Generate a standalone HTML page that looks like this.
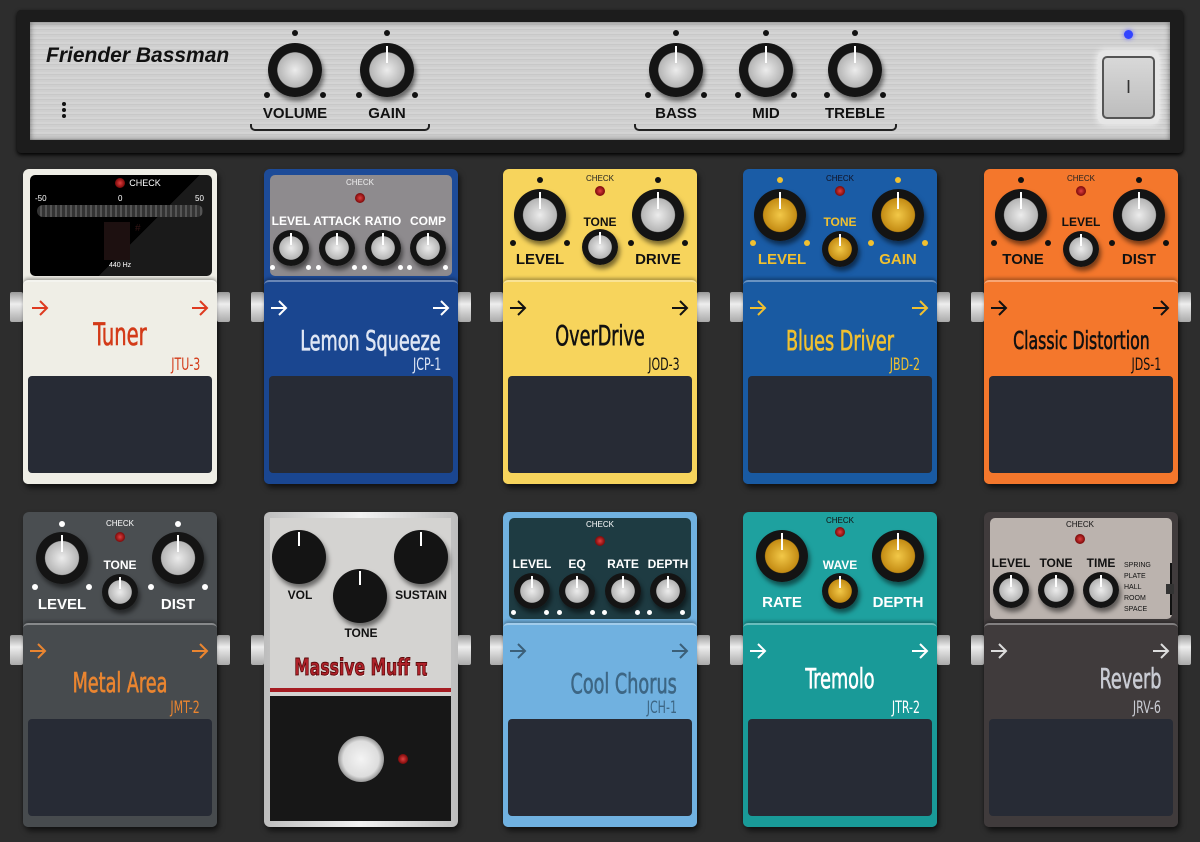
<!DOCTYPE html><html><head><meta charset="utf-8"><style>
*{box-sizing:border-box;margin:0;padding:0}
body{width:1200px;height:842px;background:#2d2d2d;position:relative;overflow:hidden;font-family:"Liberation Sans",sans-serif}
.a{position:absolute}
.amp{left:17px;top:10px;width:1166px;height:143px;background:#1c1c1c;border-radius:4px;box-shadow:0 2px 4px #000}
.face{left:30px;top:22px;width:1140px;height:118px;background:repeating-linear-gradient(180deg,#d4d4d4 0 2px,#c8c8c8 2px 3px,#cfcfcf 3px 5px);box-shadow:inset 0 0 6px rgba(0,0,0,.5)}
.k{position:absolute;border-radius:50%;box-shadow:2px 4px 5px rgba(0,0,0,.5);background:radial-gradient(circle closest-side,#ececec 0,#b5b5b5 64%,#141414 67%)}
.k.g{background:radial-gradient(circle closest-side,#f2c848 0,#c48c14 64%,#141414 67%)}
.k.b{background:#141414}
.k i{position:absolute;left:calc(50% - 1px);top:3px;width:2px;height:32%;background:#fff}
.d{position:absolute;width:6px;height:6px;border-radius:50%;background:#111}
.d.w{background:#fff}.d.y{background:#f0c030}
.l{position:absolute;font-weight:bold;transform:translateX(-50%);white-space:nowrap;font-size:14px}
.p{position:absolute;width:194px;height:315px;border-radius:6px;box-shadow:2px 4px 6px rgba(0,0,0,.6)}
.bt{position:absolute;left:0;top:111px;width:194px;height:204px;border-radius:5px;border-top:2px solid rgba(255,255,255,.35);box-shadow:0 -2px 3px rgba(0,0,0,.3)}
.pad{position:absolute;left:5px;top:207px;width:184px;height:97px;background:#272b35;border-radius:4px}
.j{position:absolute;top:123px;width:13px;height:30px;background:linear-gradient(180deg,#999,#eee 40%,#aaa);border-radius:2px}
.ar{position:absolute;top:131px;width:18px;height:16px}
.t{position:absolute;right:17px;top:152px;font-family:"DejaVu Sans Condensed","DejaVu Sans",sans-serif;font-size:28px;white-space:nowrap;transform:scaleX(.7);transform-origin:100% 50%;-webkit-text-stroke:.6px currentColor}
.t.c{right:auto;left:0;width:194px;text-align:center;transform-origin:50% 50%}
.m{position:absolute;right:17px;top:186px;font-family:"DejaVu Sans Condensed","DejaVu Sans",sans-serif;font-size:17px;transform:scaleX(.72);transform-origin:100% 50%}
.ck{position:absolute;font-size:8px;transform:translateX(-50%)}
.led{position:absolute;width:10px;height:10px;border-radius:50%;background:radial-gradient(circle,#e04040 0,#8a1010 60%,#4a0808);transform:translate(-50%,-50%)}
.pn{position:absolute;left:6px;top:6px;width:182px;height:101px;border-radius:5px}
</style></head><body>
<svg width="0" height="0" style="position:absolute"><defs><symbol id="arw" viewBox="0 0 18 16"><path d="M1 8H16M9 1L16 8L9 15" fill="none" stroke="currentColor" stroke-width="2"/></symbol></defs></svg>
<div class="a amp"></div><div class="a face"></div>
<div class="a" style="left:46px;top:44px;font-size:21px;font-weight:bold;font-style:italic;color:#111">Friender Bassman</div>
<div class="a" style="left:62px;top:102px;width:4px;height:4px;border-radius:50%;background:#111;box-shadow:0 6px #111,0 12px #111"></div>
<div class="k" style="left:268px;top:43px;width:54px;height:54px"></div>
<div class="k" style="left:360px;top:43px;width:54px;height:54px"><i></i></div>
<div class="k" style="left:649px;top:43px;width:54px;height:54px"><i></i></div>
<div class="k" style="left:739px;top:43px;width:54px;height:54px"><i></i></div>
<div class="k" style="left:828px;top:43px;width:54px;height:54px"><i></i></div>
<div class="d" style="left:292px;top:30px"></div><div class="d" style="left:264px;top:92px"></div><div class="d" style="left:320px;top:92px"></div>
<div class="d" style="left:384px;top:30px"></div><div class="d" style="left:356px;top:92px"></div><div class="d" style="left:412px;top:92px"></div>
<div class="d" style="left:673px;top:30px"></div><div class="d" style="left:645px;top:92px"></div><div class="d" style="left:701px;top:92px"></div>
<div class="d" style="left:763px;top:30px"></div><div class="d" style="left:735px;top:92px"></div><div class="d" style="left:791px;top:92px"></div>
<div class="d" style="left:852px;top:30px"></div><div class="d" style="left:824px;top:92px"></div><div class="d" style="left:880px;top:92px"></div>
<div class="l" style="left:295px;top:105px;font-size:15px;color:#111">VOLUME</div>
<div class="l" style="left:387px;top:105px;font-size:15px;color:#111">GAIN</div>
<div class="l" style="left:676px;top:105px;font-size:15px;color:#111">BASS</div>
<div class="l" style="left:766px;top:105px;font-size:15px;color:#111">MID</div>
<div class="l" style="left:855px;top:105px;font-size:15px;color:#111">TREBLE</div>
<div class="a" style="left:250px;top:124px;width:180px;height:7px;border:2px solid #222;border-top:none;border-radius:0 0 5px 5px"></div>
<div class="a" style="left:634px;top:124px;width:263px;height:7px;border:2px solid #222;border-top:none;border-radius:0 0 5px 5px"></div>
<div class="a" style="left:1124px;top:30px;width:9px;height:9px;border-radius:50%;background:#3344ff;box-shadow:0 0 5px #66f"></div>
<div class="a" style="left:1098px;top:51px;width:61px;height:73px;border-radius:6px;background:#e6e6e6;box-shadow:0 0 8px #fff"></div>
<div class="a" style="left:1102px;top:56px;width:53px;height:63px;border-radius:5px;background:linear-gradient(#d8d8d8,#bdbdbd);border:2px solid #555;text-align:center;line-height:58px;font-size:18px;color:#333">I</div>

<!-- Tuner -->
<div class="p" style="left:23px;top:169px;background:#efeee6">
<div class="j" style="left:-13px"></div><div class="j" style="left:194px"></div>
<div class="pn" style="left:7px;background:linear-gradient(135deg,#000 60%,#1a1a1a 60%)"></div>
<div class="ck" style="left:122px;top:9px;color:#fff;font-size:9px">CHECK</div>
<div class="led" style="left:97px;top:14px"></div>
<div class="a" style="left:12px;top:25px;font-size:8px;color:#fff">-50</div>
<div class="a" style="left:95px;top:25px;font-size:8px;color:#fff">0</div>
<div class="a" style="left:172px;top:25px;font-size:8px;color:#fff">50</div>
<div class="a" style="left:14px;top:36px;width:166px;height:12px;border-radius:6px;background:repeating-linear-gradient(90deg,#333 0 3px,#555 3px 5px)"></div>
<div class="a" style="left:81px;top:53px;width:26px;height:38px;background:#1d1010"></div>
<div class="a" style="left:112px;top:54px;font-size:10px;color:#331515">#</div>
<div class="a" style="left:86px;top:93px;font-size:7px;color:#fff">440 Hz</div>
<div class="bt" style="background:#efeee6"></div>
<svg class="ar" style="left:8px;color:#de3a20"><use href="#arw"/></svg><svg class="ar" style="left:168px;color:#de3a20"><use href="#arw"/></svg>
<div class="t c" style="color:#d33a18;font-size:31px;top:148px">Tuner</div>
<div class="m" style="color:#d33a18">JTU-3</div>
<div class="pad"></div></div>

<!-- Lemon Squeeze -->
<div class="p" style="left:264px;top:169px;background:#1d4b98">
<div class="j" style="left:-13px"></div><div class="j" style="left:194px"></div>
<div class="pn" style="background:#8e8b8e"></div>
<div class="ck" style="left:96px;top:9px;color:#eee">CHECK</div><div class="led" style="left:96px;top:29px"></div>
<div class="l" style="left:27px;top:45px;color:#fff;font-size:12px">LEVEL</div><div class="l" style="left:73px;top:45px;color:#fff;font-size:12px">ATTACK</div><div class="l" style="left:119px;top:45px;color:#fff;font-size:12px">RATIO</div><div class="l" style="left:164px;top:45px;color:#fff;font-size:12px">COMP</div>
<div class="k" style="left:9px;top:61px;width:36px;height:36px"><i></i></div><div class="k" style="left:55px;top:61px;width:36px;height:36px"><i></i></div><div class="k" style="left:101px;top:61px;width:36px;height:36px"><i></i></div><div class="k" style="left:146px;top:61px;width:36px;height:36px"><i></i></div>
<div class="d w" style="left:6px;top:96px;width:5px;height:5px"></div><div class="d w" style="left:42px;top:96px;width:5px;height:5px"></div><div class="d w" style="left:52px;top:96px;width:5px;height:5px"></div><div class="d w" style="left:88px;top:96px;width:5px;height:5px"></div><div class="d w" style="left:98px;top:96px;width:5px;height:5px"></div><div class="d w" style="left:134px;top:96px;width:5px;height:5px"></div><div class="d w" style="left:143px;top:96px;width:5px;height:5px"></div><div class="d w" style="left:179px;top:96px;width:5px;height:5px"></div>
<div class="bt" style="background:#1a4690"></div>
<svg class="ar" style="left:6px;color:#fff"><use href="#arw"/></svg><svg class="ar" style="left:168px;color:#fff"><use href="#arw"/></svg>
<div class="t" style="color:#dfe6f4;top:155px">Lemon Squeeze</div><div class="m" style="color:#dfe6f4">JCP-1</div>
<div class="pad"></div></div>

<!-- OverDrive -->
<div class="p" style="left:503px;top:169px;background:#f7d45c">
<div class="j" style="left:-13px"></div><div class="j" style="left:194px"></div>
<div class="ck" style="left:97px;top:5px;color:#222">CHECK</div><div class="led" style="left:97px;top:22px"></div>
<div class="d" style="left:34px;top:8px"></div><div class="d" style="left:7px;top:71px"></div><div class="d" style="left:61px;top:71px"></div>
<div class="d" style="left:152px;top:8px"></div><div class="d" style="left:125px;top:71px"></div><div class="d" style="left:179px;top:71px"></div>
<div class="k" style="left:11px;top:20px;width:52px;height:52px"><i></i></div>
<div class="k" style="left:79px;top:60px;width:36px;height:36px"><i></i></div>
<div class="k" style="left:129px;top:20px;width:52px;height:52px"><i></i></div>
<div class="l" style="left:37px;top:82px;color:#111;font-size:15px">LEVEL</div><div class="l" style="left:97px;top:46px;color:#111;font-size:12px">TONE</div><div class="l" style="left:155px;top:82px;color:#111;font-size:15px">DRIVE</div>
<div class="bt" style="background:#f7d45c"></div>
<svg class="ar" style="left:6px;color:#111"><use href="#arw"/></svg><svg class="ar" style="left:168px;color:#111"><use href="#arw"/></svg>
<div class="t c" style="color:#111;top:150px">OverDrive</div><div class="m" style="color:#111">JOD-3</div>
<div class="pad"></div></div>

<!-- Blues Driver -->
<div class="p" style="left:743px;top:169px;background:#1a5ca6">
<div class="j" style="left:-13px"></div><div class="j" style="left:194px"></div>
<div class="ck" style="left:97px;top:5px;color:#112">CHECK</div><div class="led" style="left:97px;top:22px"></div>
<div class="d y" style="left:34px;top:8px"></div><div class="d y" style="left:7px;top:71px"></div><div class="d y" style="left:61px;top:71px"></div>
<div class="d y" style="left:152px;top:8px"></div><div class="d y" style="left:125px;top:71px"></div><div class="d y" style="left:179px;top:71px"></div>
<div class="k g" style="left:11px;top:20px;width:52px;height:52px"><i></i></div>
<div class="k g" style="left:79px;top:62px;width:36px;height:36px"><i></i></div>
<div class="k g" style="left:129px;top:20px;width:52px;height:52px"><i></i></div>
<div class="l" style="left:39px;top:82px;color:#f0c030;font-size:15px">LEVEL</div><div class="l" style="left:97px;top:46px;color:#f0c030;font-size:12px">TONE</div><div class="l" style="left:155px;top:82px;color:#f0c030;font-size:15px">GAIN</div>
<div class="bt" style="background:#195aa2"></div>
<svg class="ar" style="left:6px;color:#f0c030"><use href="#arw"/></svg><svg class="ar" style="left:168px;color:#f0c030"><use href="#arw"/></svg>
<div class="t c" style="color:#f0c030;top:155px">Blues Driver</div><div class="m" style="color:#f0c030">JBD-2</div>
<div class="pad"></div></div>

<!-- Classic Distortion -->
<div class="p" style="left:984px;top:169px;background:#f4772c">
<div class="j" style="left:-13px"></div><div class="j" style="left:194px"></div>
<div class="ck" style="left:97px;top:5px;color:#222">CHECK</div><div class="led" style="left:97px;top:22px"></div>
<div class="d" style="left:34px;top:8px"></div><div class="d" style="left:7px;top:71px"></div><div class="d" style="left:61px;top:71px"></div>
<div class="d" style="left:152px;top:8px"></div><div class="d" style="left:125px;top:71px"></div><div class="d" style="left:179px;top:71px"></div>
<div class="k" style="left:11px;top:20px;width:52px;height:52px"><i></i></div>
<div class="k" style="left:79px;top:62px;width:36px;height:36px"><i></i></div>
<div class="k" style="left:129px;top:20px;width:52px;height:52px"><i></i></div>
<div class="l" style="left:39px;top:82px;color:#111;font-size:15px">TONE</div><div class="l" style="left:97px;top:46px;color:#111;font-size:12px">LEVEL</div><div class="l" style="left:155px;top:82px;color:#111;font-size:15px">DIST</div>
<div class="bt" style="background:#f4772c"></div>
<svg class="ar" style="left:6px;color:#111"><use href="#arw"/></svg><svg class="ar" style="left:168px;color:#111"><use href="#arw"/></svg>
<div class="t c" style="color:#111;font-size:25px;top:157px">Classic Distortion</div><div class="m" style="color:#111">JDS-1</div>
<div class="pad"></div></div>

<!-- Metal Area -->
<div class="p" style="left:23px;top:512px;background:#4a4e51">
<div class="j" style="left:-13px"></div><div class="j" style="left:194px"></div>
<div class="ck" style="left:97px;top:7px;color:#fff">CHECK</div><div class="led" style="left:97px;top:25px"></div>
<div class="d w" style="left:36px;top:9px"></div><div class="d w" style="left:9px;top:72px"></div><div class="d w" style="left:63px;top:72px"></div>
<div class="d w" style="left:152px;top:9px"></div><div class="d w" style="left:125px;top:72px"></div><div class="d w" style="left:179px;top:72px"></div>
<div class="k" style="left:13px;top:20px;width:52px;height:52px"><i></i></div>
<div class="k" style="left:79px;top:62px;width:36px;height:36px"><i></i></div>
<div class="k" style="left:129px;top:20px;width:52px;height:52px"><i></i></div>
<div class="l" style="left:39px;top:84px;color:#fff;font-size:15px">LEVEL</div><div class="l" style="left:97px;top:46px;color:#fff;font-size:12px">TONE</div><div class="l" style="left:155px;top:84px;color:#fff;font-size:15px">DIST</div>
<div class="bt" style="background:#474b4e"></div>
<svg class="ar" style="left:6px;color:#ea8530"><use href="#arw"/></svg><svg class="ar" style="left:168px;color:#ea8530"><use href="#arw"/></svg>
<div class="t c" style="color:#ea8530;top:154px">Metal Area</div><div class="m" style="color:#ea8530">JMT-2</div>
<div class="pad"></div></div>

<!-- Massive Muff -->
<div class="p" style="left:264px;top:512px;background:linear-gradient(90deg,#bdbdbd,#f2f2f2 50%,#bdbdbd)">
<div class="j" style="left:-13px"></div><div class="j" style="left:194px"></div>
<div class="a" style="left:6px;top:6px;width:181px;height:178px;background:#d4d3d1"></div>
<div class="a" style="left:6px;top:176px;width:181px;height:4px;background:#a51c22"></div>
<div class="a" style="left:6px;top:184px;width:181px;height:125px;background:#171717"></div>
<div class="k b" style="left:8px;top:18px;width:54px;height:54px"><i style="top:2px;height:14px"></i></div>
<div class="k b" style="left:69px;top:57px;width:54px;height:54px"><i style="top:2px;height:14px"></i></div>
<div class="k b" style="left:130px;top:18px;width:54px;height:54px"><i style="top:2px;height:14px"></i></div>
<div class="l" style="left:36px;top:76px;color:#111;font-size:12px">VOL</div>
<div class="l" style="left:97px;top:114px;color:#111;font-size:12px">TONE</div>
<div class="l" style="left:157px;top:76px;color:#111;font-size:12px">SUSTAIN</div>
<div class="l" style="left:97px;top:143px;color:#b0222a;font-size:23px;font-family:'DejaVu Sans',sans-serif;-webkit-text-stroke:1px #5a0a0a;text-shadow:1px 1px #fff;transform:translateX(-50%) scaleX(.68)">Massive Muff π</div>
<div class="a" style="left:74px;top:224px;width:46px;height:46px;border-radius:50%;background:radial-gradient(circle,#f4f4f4 0,#ddd 55%,#999 70%,#666)"></div>
<div class="led" style="left:139px;top:247px"></div>
</div>

<!-- Cool Chorus -->
<div class="p" style="left:503px;top:512px;background:#70b1e0">
<div class="j" style="left:-13px"></div><div class="j" style="left:194px"></div>
<div class="pn" style="background:#1e3b42"></div>
<div class="ck" style="left:97px;top:8px;color:#fff">CHECK</div><div class="led" style="left:97px;top:29px"></div>
<div class="l" style="left:29px;top:45px;color:#fff;font-size:12px">LEVEL</div><div class="l" style="left:74px;top:45px;color:#fff;font-size:12px">EQ</div><div class="l" style="left:120px;top:45px;color:#fff;font-size:12px">RATE</div><div class="l" style="left:165px;top:45px;color:#fff;font-size:12px">DEPTH</div>
<div class="k" style="left:11px;top:61px;width:36px;height:36px"><i></i></div><div class="k" style="left:56px;top:61px;width:36px;height:36px"><i></i></div><div class="k" style="left:102px;top:61px;width:36px;height:36px"><i></i></div><div class="k" style="left:147px;top:61px;width:36px;height:36px"><i></i></div>
<div class="d w" style="left:8px;top:98px;width:5px;height:5px"></div><div class="d w" style="left:41px;top:98px;width:5px;height:5px"></div><div class="d w" style="left:54px;top:98px;width:5px;height:5px"></div><div class="d w" style="left:87px;top:98px;width:5px;height:5px"></div><div class="d w" style="left:99px;top:98px;width:5px;height:5px"></div><div class="d w" style="left:132px;top:98px;width:5px;height:5px"></div><div class="d w" style="left:144px;top:98px;width:5px;height:5px"></div><div class="d w" style="left:177px;top:98px;width:5px;height:5px"></div>
<div class="bt" style="background:#70b1e0"></div>
<svg class="ar" style="left:6px;color:#3b5f78"><use href="#arw"/></svg><svg class="ar" style="left:168px;color:#3b5f78"><use href="#arw"/></svg>
<div class="t" style="color:#3d6684;right:20px;top:155px">Cool Chorus</div><div class="m" style="color:#3d6684;right:20px">JCH-1</div>
<div class="pad"></div></div>

<!-- Tremolo -->
<div class="p" style="left:743px;top:512px;background:#1ea19f">
<div class="j" style="left:-13px"></div><div class="j" style="left:194px"></div>
<div class="ck" style="left:97px;top:4px;color:#111">CHECK</div><div class="led" style="left:97px;top:20px"></div>
<div class="k g" style="left:13px;top:18px;width:52px;height:52px"><i></i></div>
<div class="k g" style="left:79px;top:61px;width:36px;height:36px"><i></i></div>
<div class="k g" style="left:129px;top:18px;width:52px;height:52px"><i></i></div>
<div class="l" style="left:39px;top:82px;color:#fff;font-size:15px">RATE</div><div class="l" style="left:97px;top:46px;color:#fff;font-size:12px">WAVE</div><div class="l" style="left:155px;top:82px;color:#fff;font-size:15px">DEPTH</div>
<div class="bt" style="background:#199a98"></div>
<svg class="ar" style="left:6px;color:#fff"><use href="#arw"/></svg><svg class="ar" style="left:168px;color:#fff"><use href="#arw"/></svg>
<div class="t c" style="color:#fff;top:150px">Tremolo</div><div class="m" style="color:#fff">JTR-2</div>
<div class="pad"></div></div>

<!-- Reverb -->
<div class="p" style="left:984px;top:512px;background:#403b3c">
<div class="j" style="left:-13px"></div><div class="j" style="left:194px"></div>
<div class="pn" style="background:#bbb3ae"></div>
<div class="ck" style="left:96px;top:8px;color:#111">CHECK</div><div class="led" style="left:96px;top:27px"></div>
<div class="l" style="left:27px;top:44px;color:#111;font-size:12px">LEVEL</div><div class="l" style="left:72px;top:44px;color:#111;font-size:12px">TONE</div><div class="l" style="left:117px;top:44px;color:#111;font-size:12px">TIME</div>
<div class="k" style="left:9px;top:60px;width:36px;height:36px"><i></i></div><div class="k" style="left:54px;top:60px;width:36px;height:36px"><i></i></div><div class="k" style="left:99px;top:60px;width:36px;height:36px"><i></i></div>
<div class="a" style="left:140px;top:48px;font-size:7px;line-height:11px;color:#111">SPRING<br>PLATE<br>HALL<br>ROOM<br>SPACE</div>
<div class="a" style="left:186px;top:51px;width:2px;height:52px;background:#111"></div>
<div class="a" style="left:182px;top:72px;width:8px;height:10px;background:#333"></div>
<div class="bt" style="background:#403b3c"></div>
<svg class="ar" style="left:6px;color:#ddd"><use href="#arw"/></svg><svg class="ar" style="left:168px;color:#ddd"><use href="#arw"/></svg>
<div class="t" style="color:#c9cbd3;top:150px">Reverb</div><div class="m" style="color:#c9cbd3">JRV-6</div>
<div class="pad"></div></div>
</body></html>
